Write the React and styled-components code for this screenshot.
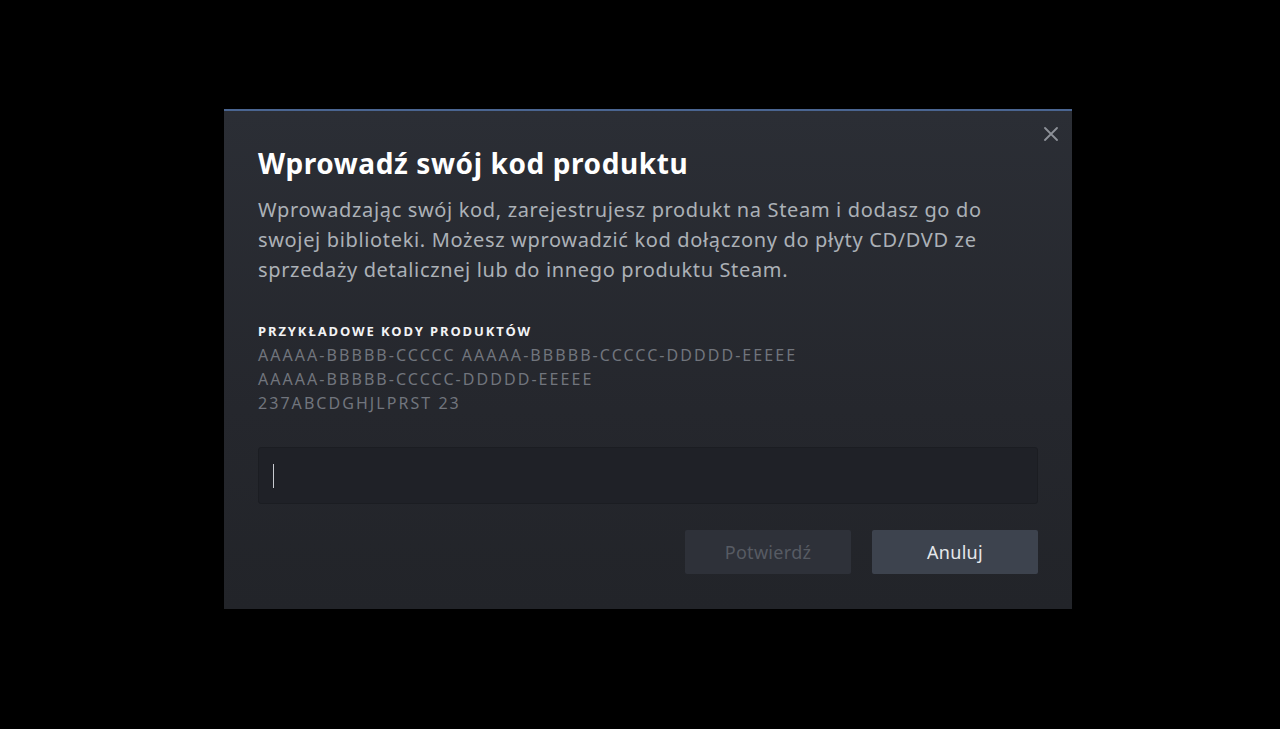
import React from 'react';
import styled, { createGlobalStyle } from 'styled-components';

const GlobalStyle = createGlobalStyle`
  html, body {
    margin: 0;
    padding: 0;
    background: #000;
  }
  body {
    font-family: "Noto Sans", "Open Sans", sans-serif;
  }
`;

const Backdrop = styled.div`
  width: 1280px;
  height: 729px;
  background: #000;
  display: flex;
  justify-content: flex-start;
  padding: 109px 0 0 224px;
  box-sizing: border-box;
`;

const Dialog = styled.div`
  position: relative;
  width: 848px;
  height: 500px;
  box-sizing: border-box;
  padding: 34px 34px 35px 34px;
  background: linear-gradient(to bottom, #2b2e35 0%, #25272d 60%, #222429 100%);
  border-top: 2px solid #4a6591;
  display: flex;
  flex-direction: column;
`;

const CloseButton = styled.button`
  position: absolute;
  top: 11px;
  right: 9px;
  width: 24px;
  height: 24px;
  padding: 0;
  border: none;
  background: transparent;
  display: flex;
  align-items: center;
  justify-content: center;
  cursor: pointer;
`;

const Title = styled.h1`
  margin: 0;
  font-size: 28px;
  line-height: 36px;
  font-weight: 700;
  color: #ffffff;
  letter-spacing: 0.6px;
`;

const Description = styled.p`
  margin: 14px 0 0 0;
  font-size: 20px;
  line-height: 30px;
  letter-spacing: 0.65px;
  color: #acb1b7;
`;

const Section = styled.div`
  margin-top: 38px;
`;

const Label = styled.div`
  font-size: 13px;
  line-height: 16px;
  font-weight: 700;
  letter-spacing: 1.9px;
  text-transform: uppercase;
  color: #f2f3f5;
`;

const CodeList = styled.div`
  margin-top: 4px;
`;

const CodeLine = styled.div`
  font-size: 16px;
  line-height: 24px;
  letter-spacing: 2.05px;
  color: #71757d;
`;

const Input = styled.div`
  margin-top: 32px;
  height: 57px;
  box-sizing: border-box;
  background: #1f2127;
  border: 1px solid #1b1d22;
  border-radius: 3px;
  display: flex;
  align-items: center;
  padding-left: 14px;
`;

const Caret = styled.span`
  display: block;
  width: 1px;
  height: 24px;
  background: #c8cbd0;
`;

const Actions = styled.div`
  margin-top: 26px;
  display: flex;
  justify-content: flex-end;
  gap: 21px;
`;

const Button = styled.button`
  width: 166px;
  height: 44px;
  border: none;
  border-radius: 2px;
  font-family: "Noto Sans", "Open Sans", sans-serif;
  font-size: 18px;
  letter-spacing: 0.3px;
  background: ${p => (p.$disabled ? '#2e3139' : '#3d434e')};
  color: ${p => (p.$disabled ? '#575b63' : '#e6e8eb')};
  cursor: ${p => (p.$disabled ? 'default' : 'pointer')};
`;

const codes = [
  'AAAAA-BBBBB-CCCCC AAAAA-BBBBB-CCCCC-DDDDD-EEEEE',
  'AAAAA-BBBBB-CCCCC-DDDDD-EEEEE',
  '237ABCDGHJLPRST 23',
];

export default function App() {
  return (
    <>
      <GlobalStyle />
      <Backdrop>
        <Dialog>
          <CloseButton aria-label="Zamknij">
            <svg width="14" height="14" viewBox="0 0 14 14">
              <path d="M1 1 L13 13 M13 1 L1 13" stroke="#8d9198" strokeWidth="1.8" strokeLinecap="round" />
            </svg>
          </CloseButton>
          <Title>Wprowadź swój kod produktu</Title>
          <Description>
            Wprowadzając swój kod, zarejestrujesz produkt na Steam i dodasz go do swojej biblioteki. Możesz
            wprowadzić kod dołączony do płyty CD/DVD ze sprzedaży detalicznej lub do innego produktu Steam.
          </Description>
          <Section>
            <Label>Przykładowe kody produktów</Label>
            <CodeList>
              {codes.map(c => (
                <CodeLine key={c}>{c}</CodeLine>
              ))}
            </CodeList>
          </Section>
          <Input>
            <Caret />
          </Input>
          <Actions>
            <Button $disabled>Potwierdź</Button>
            <Button>Anuluj</Button>
          </Actions>
        </Dialog>
      </Backdrop>
    </>
  );
}
